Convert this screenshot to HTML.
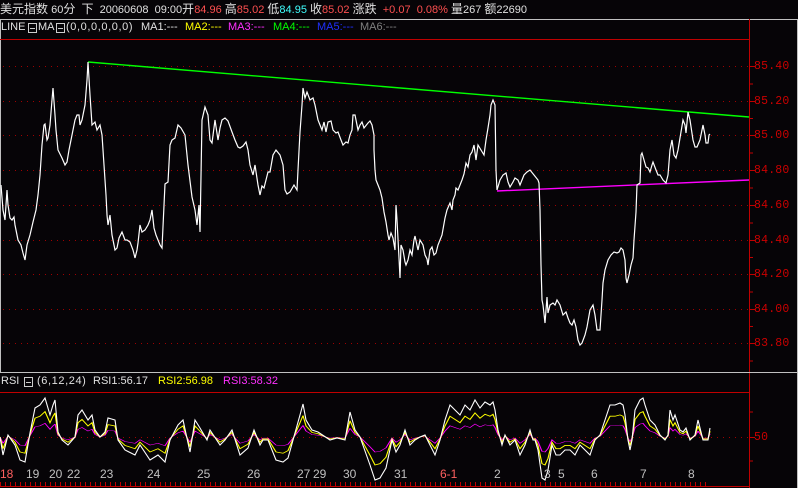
<!DOCTYPE html>
<html><head><meta charset="utf-8"><style>
html,body{margin:0;padding:0;background:#060407;}
#c{position:relative;width:798px;height:488px;overflow:hidden;background:#060407;font-family:"Liberation Sans","Noto Sans CJK SC",sans-serif;}
.t{position:absolute;white-space:nowrap;font-size:11px;line-height:12px;color:#e0e0e0;}
.cj{font-size:12px;}
.sp{letter-spacing:0.6px;}
.r{color:#ff5050}.cy{color:#40ffff}.y{color:#ffff00}.m{color:#ff30ff}.g{color:#00ff00}.b{color:#2030ff}.gr{color:#808080}
.box{position:absolute;width:7px;height:8px;border:1px solid #ccc;}
.box:after{content:"";position:absolute;left:1px;top:4px;width:5px;height:1px;background:#ccc;}
.ax{position:absolute;left:754px;font-family:"Liberation Mono",monospace;font-size:11.5px;letter-spacing:0.2px;color:#cc0000;}
.d{position:absolute;top:467px;font-size:12px;color:#c0c0c0;}
</style></head><body><div id="c">
<svg width="798" height="488" style="position:absolute;left:0;top:0">
<line x1="0" y1="19.5" x2="798" y2="19.5" stroke="#c0c0c0"/>
<line x1="797.5" y1="19" x2="797.5" y2="488" stroke="#c0c0c0"/>
<line x1="0.5" y1="19" x2="0.5" y2="372" stroke="#c0c0c0"/>
<line x1="0" y1="39.5" x2="749" y2="39.5" stroke="#c00000"/>
<line x1="749.5" y1="19" x2="749.5" y2="488" stroke="#c00000"/>
<line x1="0" y1="372.5" x2="798" y2="372.5" stroke="#c0c0c0"/>
<line x1="0" y1="392.5" x2="749" y2="392.5" stroke="#c00000"/>
<line x1="0" y1="486.5" x2="749" y2="486.5" stroke="#c00000"/>
<g stroke="#a00000" stroke-dasharray="1,5">
<line x1="3" y1="66.5" x2="749" y2="66.5"/><line x1="3" y1="101.5" x2="749" y2="101.5"/>
<line x1="3" y1="135.5" x2="749" y2="135.5"/><line x1="3" y1="170.5" x2="749" y2="170.5"/>
<line x1="3" y1="205.5" x2="749" y2="205.5"/><line x1="3" y1="240.5" x2="749" y2="240.5"/>
<line x1="3" y1="274.5" x2="749" y2="274.5"/><line x1="3" y1="309.5" x2="749" y2="309.5"/>
<line x1="3" y1="343.5" x2="749" y2="343.5"/><line x1="3" y1="437.5" x2="749" y2="437.5"/>
</g>
<g stroke="#c00000">
<line x1="749" y1="66.5" x2="755" y2="66.5"/><line x1="749" y1="84" x2="753" y2="84"/>
<line x1="749" y1="101.5" x2="755" y2="101.5"/><line x1="749" y1="118.5" x2="753" y2="118.5"/>
<line x1="749" y1="135.5" x2="755" y2="135.5"/><line x1="749" y1="153" x2="753" y2="153"/>
<line x1="749" y1="170.5" x2="755" y2="170.5"/><line x1="749" y1="188" x2="753" y2="188"/>
<line x1="749" y1="205.5" x2="755" y2="205.5"/><line x1="749" y1="223" x2="753" y2="223"/>
<line x1="749" y1="240.5" x2="755" y2="240.5"/><line x1="749" y1="257.5" x2="753" y2="257.5"/>
<line x1="749" y1="274.5" x2="755" y2="274.5"/><line x1="749" y1="292" x2="753" y2="292"/>
<line x1="749" y1="309.5" x2="755" y2="309.5"/><line x1="749" y1="326.5" x2="753" y2="326.5"/>
<line x1="749" y1="343.5" x2="755" y2="343.5"/><line x1="749" y1="361" x2="753" y2="361"/>
<line x1="749" y1="437.5" x2="755" y2="437.5"/><line x1="749" y1="461" x2="753" y2="461"/>
<line x1="749" y1="412" x2="753" y2="412"/>
</g>
<g stroke="#c00000" stroke-dasharray="1,4"><line x1="0" y1="484" x2="710" y2="484" stroke-width="4"/></g>
<polyline fill="none" stroke="#00ff00" stroke-width="1.4" points="88,62 749,117"/>
<polyline fill="none" stroke="#ff00ff" stroke-width="1.4" points="497,191 749,180"/>
<polyline fill="none" stroke="#ffffff" stroke-width="1.2" points="1,185 3,210 5,220 7,190 8,205 10,218 12,220 14,217 15,225 18,240 21,245 23,253 25,260 27,245 30,235 33,222 36,210 38,195 40,175 42,145 44,125 45,124 47,140 48,138 50,125 52,100 53,88 55,115 56,130 58,150 62,158 65,165 67,162 69,150 72,135 75,120 77,115 79,115 80,125 82,120 85,105 87,80 88,62 90,95 92,125 95,122 97,130 100,125 102,135 104,165 106,195 107,215 108,225 110,215 112,235 114,245 115,250 117,248 119,238 122,232 125,240 127,240 130,242 133,250 135,258 137,250 138,243 140,225 142,232 145,230 148,225 150,220 152,210 154,228 156,235 158,240 160,245 162,248 165,184 168,182 170,145 172,140 175,138 178,125 181,128 185,135 188,165 192,197 195,210 197,225 199,205 200,232 202,120 205,107 208,115 210,140 212,143 215,120 218,140 220,128 222,120 225,118 228,121 232,132 235,140 238,147 240,148 243,146 246,142 248,150 250,165 253,175 255,165 258,185 260,195 262,186 264,188 266,180 268,172 270,172 273,155 276,150 280,155 283,165 285,190 287,194 290,192 294,185 297,190 298,170 300,132 302,105 303,88 305,98 307,92 310,100 313,98 315,105 318,120 320,125 322,130 324,122 326,132 328,122 331,121 333,130 336,133 338,132 341,140 343,145 346,142 348,143 350,135 352,130 353,115 355,115 357,125 358,130 360,125 362,122 364,128 368,123 370,121 372,125 374,135 374,150 375,170 376,180 378,185 380,190 382,198 384,212 386,222 388,235 389,240 391,233 393,238 395,250 396,205 397,220 399,258 400,278 401,245 403,250 405,262 406,265 408,260 410,250 412,255 414,240 415,236 418,250 420,240 423,245 425,255 427,259 428,265 430,250 432,247 434,255 436,253 438,245 440,240 442,235 445,218 447,210 450,203 452,210 453,200 455,195 456,188 458,190 460,185 462,180 464,174 466,163 468,167 470,155 472,152 474,145 476,160 478,145 481,150 484,155 486,140 488,128 490,115 491,105 493,100 495,105 496,170 497,190 500,180 503,175 506,173 508,182 510,187 513,182 515,178 518,180 520,185 524,175 527,172 530,170 534,175 538,180 539,183 540,210 541,265 542,300 543,305 545,323 546,310 547,297 548,313 550,305 553,303 555,305 557,300 560,305 563,315 566,312 568,318 570,323 572,325 574,320 576,327 578,340 580,345 582,343 585,335 587,327 590,310 593,305 595,315 597,330 600,330 602,300 603,283 605,270 608,260 611,255 614,252 617,253 619,252 621,248 623,250 625,260 626,278 627,283 629,275 631,265 633,258 634,240 636,212 637,185 640,183 641,155 642,153 644,160 646,167 648,168 650,172 652,165 653,162 656,170 658,175 660,175 663,180 666,183 668,175 670,150 672,140 674,155 676,158 678,150 680,138 683,120 685,125 686,133 688,112 690,120 693,140 695,147 697,147 700,140 702,130 703,125 705,135 706,143 708,143 709,135 710,134"/>
<defs><polyline id="rsi" fill="none" points="0,437 3,455 8,435 15,445 20,460 25,462 30,433 35,408 40,405 45,398 50,415 53,405 55,400 58,432 62,440 68,445 75,437 78,415 82,410 88,420 92,415 95,430 100,437 105,432 108,418 115,420 118,440 125,450 135,455 140,445 150,460 158,455 165,462 170,440 178,425 183,420 190,452 195,420 200,428 207,440 210,430 220,445 225,440 232,430 240,455 248,448 254,430 260,445 263,440 268,440 276,460 283,462 288,458 300,415 303,404 306,420 312,430 318,432 330,440 337,438 345,440 350,412 355,430 360,437 370,465 375,480 380,478 386,468 392,440 396,452 400,445 405,430 410,445 415,440 420,437 425,435 430,445 435,455 440,440 445,420 450,405 455,410 460,415 465,405 470,410 475,400 480,408 485,402 490,405 493,402 495,410 498,430 502,445 505,435 510,445 515,440 520,455 525,445 530,430 533,440 535,440 538,450 542,478 545,480 548,470 552,445 556,455 560,455 565,450 570,450 575,455 580,445 585,450 590,455 595,440 600,435 605,420 610,405 615,405 620,403 623,405 625,415 628,440 630,450 632,440 635,410 640,400 643,398 645,405 650,420 655,425 660,435 665,440 668,435 670,410 673,420 675,415 680,430 683,432 686,428 690,440 695,435 698,420 703,440 708,440 710,428"/></defs>
<g transform="translate(0,437) scale(1,0.35) translate(0,-437)"><use href="#rsi" stroke="#ff00ff" stroke-width="1.2" vector-effect="non-scaling-stroke"/></g>
<g transform="translate(0,437) scale(1,0.65) translate(0,-437)"><use href="#rsi" stroke="#ffff00" stroke-width="1.2" vector-effect="non-scaling-stroke"/></g>
<use href="#rsi" stroke="#ffffff" stroke-width="1.1"/>
</svg>
<div class="t" style="left:0;top:3px"><span class="cj">美元指数</span> 60<span class="cj">分</span>&nbsp; <span class="cj">下</span>&nbsp; 20060608&nbsp; 09:00<span class="cj">开</span><span class="r">84.96</span> <span class="cj">高</span><span class="r">85.02</span> <span class="cj">低</span><span class="cy">84.95</span> <span class="cj">收</span><span class="r">85.02</span> <span class="cj">涨跌</span>&nbsp; <span class="r">+0.07&nbsp; 0.08%</span> <span class="cj">量</span>267 <span class="cj">额</span>22690</div>
<div class="t" style="left:1px;top:21px">LINE</div><div class="box" style="left:28px;top:23px"></div>
<div class="t" style="left:38px;top:21px">MA</div><div class="box" style="left:56px;top:23px"></div>
<div class="t sp" style="left:66px;top:21px">(0,0,0,0,0,0)</div>
<div class="t" style="left:141px;top:21px">MA1:---</div>
<div class="t y" style="left:185px;top:21px">MA2:---</div>
<div class="t m" style="left:228px;top:21px">MA3:---</div>
<div class="t g" style="left:273px;top:21px">MA4:---</div>
<div class="t b" style="left:317px;top:21px">MA5:---</div>
<div class="t gr" style="left:360px;top:21px">MA6:---</div>
<div class="t" style="left:1px;top:375px">RSI</div><div class="box" style="left:24px;top:377px"></div>
<div class="t sp" style="left:37px;top:375px">(6,12,24)</div>
<div class="t" style="left:93px;top:375px">RSI1:56.17</div>
<div class="t y" style="left:158px;top:375px">RSI2:56.98</div>
<div class="t m" style="left:223px;top:375px">RSI3:58.32</div>
<div class="ax" style="top:60px">85.40</div><div class="ax" style="top:95px">85.20</div>
<div class="ax" style="top:129px">85.00</div><div class="ax" style="top:164px">84.80</div>
<div class="ax" style="top:199px">84.60</div><div class="ax" style="top:234px">84.40</div>
<div class="ax" style="top:268px">84.20</div><div class="ax" style="top:303px">84.00</div>
<div class="ax" style="top:337px">83.80</div><div class="ax" style="top:431px">50</div>
<div class="d" style="left:0;color:#ff6060">18</div><div class="d" style="left:26px">19</div>
<div class="d" style="left:49px">20</div><div class="d" style="left:67px">22</div>
<div class="d" style="left:100px">23</div><div class="d" style="left:147px">24</div>
<div class="d" style="left:197px">25</div><div class="d" style="left:247px">26</div>
<div class="d" style="left:297px">27</div><div class="d" style="left:313px">29</div>
<div class="d" style="left:343px">30</div><div class="d" style="left:394px">31</div>
<div class="d" style="left:440px;color:#ff6060">6-1</div><div class="d" style="left:494px">2</div>
<div class="d" style="left:544px">3</div><div class="d" style="left:558px">5</div>
<div class="d" style="left:591px">6</div><div class="d" style="left:640px">7</div>
<div class="d" style="left:688px">8</div>
</div></body></html>
